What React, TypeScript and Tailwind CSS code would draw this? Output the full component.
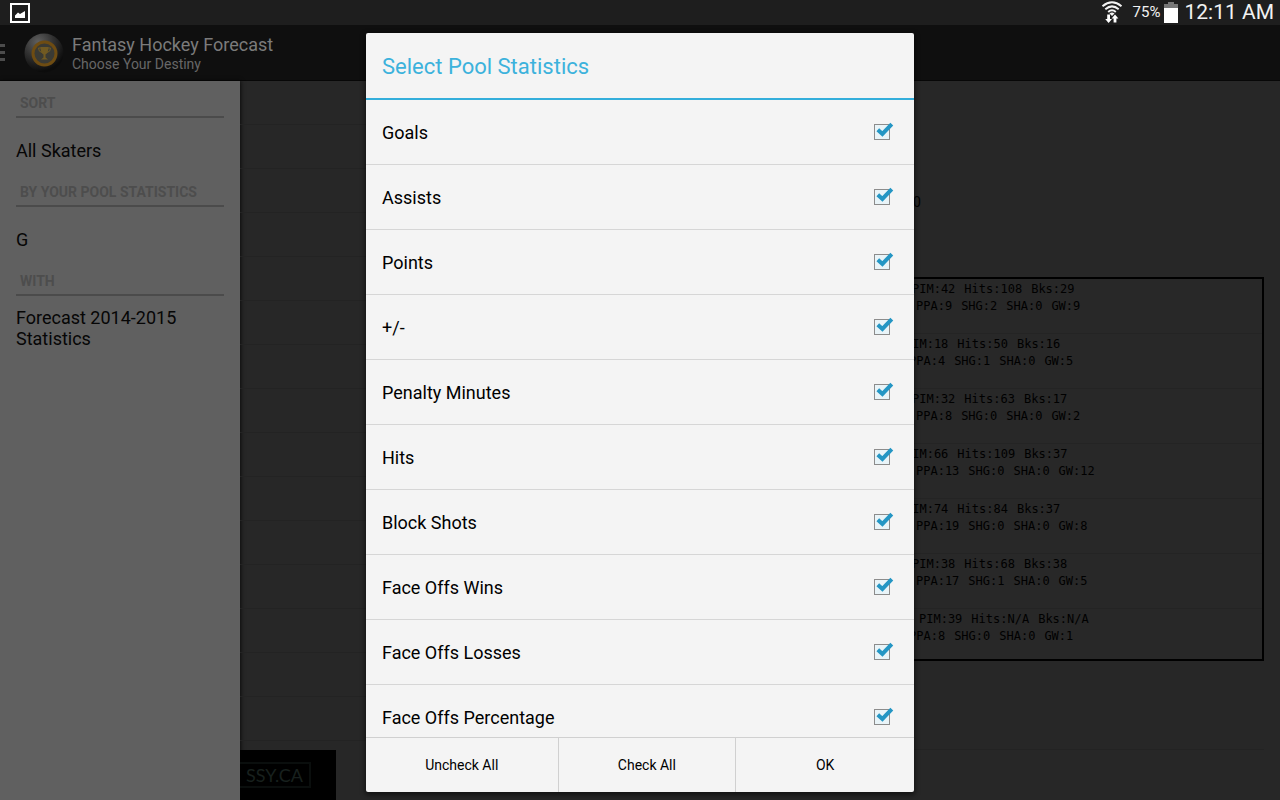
import React, { useState } from 'react';

const STATISTICS = [
  'Goals',
  'Assists',
  'Points',
  '+/-',
  'Penalty Minutes',
  'Hits',
  'Block Shots',
  'Face Offs Wins',
  'Face Offs Losses',
  'Face Offs Percentage',
];

interface PlayerLine {
  top: string[];
  topIndent: string;
  bottom: string[];
  bottomIndent: string;
}

const PLAYERS: PlayerLine[] = [
  { top: ['PIM:42', 'Hits:108', 'Bks:29'], topIndent: 'pl-[7px]', bottom: ['PPA:9', 'SHG:2', 'SHA:0', 'GW:9'], bottomIndent: 'pl-[11px]' },
  { top: ['PIM:18', 'Hits:50', 'Bks:16'], topIndent: 'pl-0', bottom: ['PPA:4', 'SHG:1', 'SHA:0', 'GW:5'], bottomIndent: 'pl-[4px]' },
  { top: ['PIM:32', 'Hits:63', 'Bks:17'], topIndent: 'pl-[7px]', bottom: ['PPA:8', 'SHG:0', 'SHA:0', 'GW:2'], bottomIndent: 'pl-[11px]' },
  { top: ['PIM:66', 'Hits:109', 'Bks:37'], topIndent: 'pl-0', bottom: ['PPA:13', 'SHG:0', 'SHA:0', 'GW:12'], bottomIndent: 'pl-[11px]' },
  { top: ['PIM:74', 'Hits:84', 'Bks:37'], topIndent: 'pl-0', bottom: ['PPA:19', 'SHG:0', 'SHA:0', 'GW:8'], bottomIndent: 'pl-[11px]' },
  { top: ['PIM:38', 'Hits:68', 'Bks:38'], topIndent: 'pl-[7px]', bottom: ['PPA:17', 'SHG:1', 'SHA:0', 'GW:5'], bottomIndent: 'pl-[11px]' },
  { top: ['PIM:39', 'Hits:N/A', 'Bks:N/A'], topIndent: 'pl-[14px]', bottom: ['PPA:8', 'SHG:0', 'SHA:0', 'GW:1'], bottomIndent: 'pl-[4px]' },
];

const StatusBar: React.FC = () => (
  <div className="h-[25px] shrink-0 bg-[#1e1e1e] flex items-center justify-between pl-[10px] pr-[6px] text-[#f2f2f2]">
    <svg className="size-5" viewBox="0 0 20 20" aria-hidden="true">
      <rect x="1" y="1" width="18" height="18" fill="none" stroke="#fff" strokeWidth="2" />
      <path d="M5 15V12.5L8 9.5L10 11L15 8V15Z" fill="#fff" />
    </svg>
    <div className="h-full flex items-center pb-[2px]">
      <svg className="w-[22px] h-[22px]" viewBox="0 0 22 22" aria-hidden="true">
        <g fill="none" stroke="#f2f2f2" strokeWidth="2">
          <path d="M1.5 5.2Q11 -2.6 20.5 5.2" />
          <path d="M4.3 8.2Q11 2.6 17.7 8.2" />
          <path d="M7.2 11Q11 7.6 14.8 11" />
        </g>
        <path d="M8.5 12.5Q11 10.5 13.5 12.5L11 15Z" fill="#f2f2f2" />
        <path d="M6.2 13.5H9V18H11L7.6 22L4.2 18H6.2ZM12.6 21.5H15.4V17.5H17.4L14 13.5L10.6 17.5H12.6Z" fill="#fff" />
      </svg>
      <span className="ml-[10px] text-[15px] leading-5">75%</span>
      <svg className="w-[14px] h-[22px] ml-1" viewBox="0 0 14 22" aria-hidden="true">
        <path d="M4 1H10V3H14V7H0V3H4Z" fill="#777" />
        <rect y="7" width="14" height="15" fill="#fff" />
      </svg>
      <span className="ml-[6px] text-[21px] leading-6">12:11 AM</span>
    </div>
  </div>
);

const AppLogo: React.FC = () => (
  <svg className="size-10" viewBox="0 0 40 40" aria-hidden="true">
    <defs>
      <radialGradient id="puck" cx="35%" cy="22%" r="75%">
        <stop offset="0" stopColor="#606060" />
        <stop offset="0.5" stopColor="#333" />
        <stop offset="1" stopColor="#0c0c0c" />
      </radialGradient>
    </defs>
    <circle cx="20" cy="20" r="19.5" fill="url(#puck)" />
    <circle cx="20.5" cy="20.5" r="11.5" fill="#3a3a34" stroke="#6e4c12" strokeWidth="3" />
    <path d="M16.5 14H24.5Q24.5 20 21.5 21.5V24.5L24 26.5H17L19.5 24.5V21.5Q16.5 20 16.5 14Z" fill="#715a22" />
    <path d="M17 15H14.5Q14.5 19 18 19.5M24 15H26.5Q26.5 19 23 19.5" fill="none" stroke="#715a22" />
  </svg>
);

const ActionBar: React.FC = () => (
  <header className="h-14 shrink-0 bg-[#0f0f0f] border-b border-[#070707] flex items-center">
    <button type="button" aria-label="Open menu" className="w-[5px] flex flex-col gap-1">
      <span className="h-[3px] bg-[#4c4c4c]"></span>
      <span className="h-[3px] bg-[#4c4c4c]"></span>
      <span className="h-[3px] bg-[#4c4c4c]"></span>
    </button>
    <div className="ml-[19px]">
      <AppLogo />
    </div>
    <div className="ml-2 pt-[2px]">
      <h1 className="text-[18px] leading-5 text-[#7b7b7b]">Fantasy Hockey Forecast</h1>
      <p className="text-[14px] leading-[18px] text-[#676767]">Choose Your Destiny</p>
    </div>
  </header>
);

const DrawerSection: React.FC<{ title: string; value: string }> = ({ title, value }) => (
  <section>
    <h2 className="h-[25px] pl-1 border-b-2 border-[#4b4b4b] text-[14px] leading-5 font-bold text-[#4d4d4d]">{title}</h2>
    <div className="h-16 flex items-center text-[18px] leading-[21px] text-[#060606]">{value}</div>
  </section>
);

const StatLine: React.FC<{ items: string[]; indent: string }> = ({ items, indent }) => (
  <div className={`flex gap-[9px] leading-[17px] ${indent}`}>
    {items.map((item) => (
      <span key={item}>{item}</span>
    ))}
  </div>
);

const PlayerStats: React.FC = () => (
  <section className="w-1/2 pr-4 flex flex-col">
    <div className="h-[196px] pt-[110px] pl-[153px] text-[14px] leading-[22px]">0</div>
    <div className="h-96 shrink-0 overflow-hidden border-2 border-black bg-[#282828] font-['DejaVu_Sans_Mono',monospace] text-[12px]">
      {PLAYERS.map((player, i) => (
        <div key={i} className="h-[55px] pt-[2px] pl-[143px] border-b border-[#242424]">
          <StatLine items={player.top} indent={player.topIndent} />
          <StatLine items={player.bottom} indent={player.bottomIndent} />
        </div>
      ))}
    </div>
    <div className="h-[89px] shrink-0 border-b border-[#232323]"></div>
  </section>
);

const PoolDialog: React.FC = () => {
  const [checked, setChecked] = useState<boolean[]>(STATISTICS.map(() => true));

  const toggle = (index: number) => {
    setChecked(checked.map((value, i) => (i === index ? !value : value)));
  };

  return (
    <div
      role="dialog"
      aria-labelledby="dialog-title"
      className="w-full max-w-[548px] h-full flex flex-col rounded-[2px] bg-[#f4f4f4] text-black overflow-hidden shadow-[0_2px_5px_1px_rgba(0,0,0,0.5)]"
    >
      <h2 id="dialog-title" className="h-[67px] shrink-0 px-4 pt-[2px] flex items-center border-b-2 border-[#33aedb] text-[22px] text-[#3cb2dc]">
        Select Pool Statistics
      </h2>
      <div className="flex-1 min-h-0 overflow-y-auto [scrollbar-width:none]">
        {STATISTICS.map((name, i) => (
          <label key={name} className="h-[65px] pl-4 pr-6 flex items-center justify-between border-b border-[#d6d6d6] text-[18px]">
            {name}
            <span className="relative size-4">
              <input
                type="checkbox"
                checked={checked[i]}
                onChange={() => toggle(i)}
                className="block size-4 appearance-none border border-[#8c8c8c] checked:bg-[#e9f4f8]"
              />
              {checked[i] && (
                <svg className="absolute -top-1 left-0 size-5 pointer-events-none" viewBox="0 0 20 20" aria-hidden="true">
                  <path d="M3.8 9.8L8.4 14L17.8 4.2" fill="none" stroke="#2496c4" strokeWidth="4" />
                </svg>
              )}
            </span>
          </label>
        ))}
      </div>
      <div className="h-[55px] shrink-0 grid grid-cols-[13fr_12fr_12fr] border-t border-[#d0d0d0] divide-x divide-[#d0d0d0] text-[14px]">
        <button type="button" onClick={() => setChecked(STATISTICS.map(() => false))}>Uncheck All</button>
        <button type="button" onClick={() => setChecked(STATISTICS.map(() => true))}>Check All</button>
        <button type="button">OK</button>
      </div>
    </div>
  );
};

const App: React.FC = () => {
  return (
    <div className="relative h-screen flex flex-col overflow-hidden bg-[#272727] font-[Roboto,sans-serif]">
      <StatusBar />
      <ActionBar />
      <div className="flex-1 min-h-0 flex">
        <aside className="w-60 shrink-0 px-4 pt-3 bg-[#606060] shadow-[1px_0_4px_rgba(0,0,0,0.7)]">
          <DrawerSection title="SORT" value="All Skaters" />
          <DrawerSection title="BY YOUR POOL STATISTICS" value="G" />
          <DrawerSection title="WITH" value="Forecast 2014-2015 Statistics" />
        </aside>
        <main className="flex-1 min-w-0 flex">
          <div className="w-1/2 flex flex-col">
            <div className="flex-1 min-h-0 overflow-hidden">
              {Array.from({ length: 15 }, (_, i) => (
                <div key={i} className="h-11 border-b border-[#232323]"></div>
              ))}
            </div>
            {/* Ad banner */}
            <div className="w-24 h-[50px] shrink-0 bg-black flex items-center justify-end pr-[25px]">
              <span className="w-[71px] h-[26px] pr-[6px] flex items-center justify-end border-2 border-l-0 border-[#0a0e0d] font-[Lato,sans-serif] text-[18px] text-[#18201e]">
                SSY.CA
              </span>
            </div>
          </div>
          <PlayerStats />
        </main>
      </div>

      {/* Modal layer */}
      <div className="absolute inset-0 pt-[33px] pb-2 flex justify-center">
        <PoolDialog />
      </div>
    </div>
  );
};

export default App;
